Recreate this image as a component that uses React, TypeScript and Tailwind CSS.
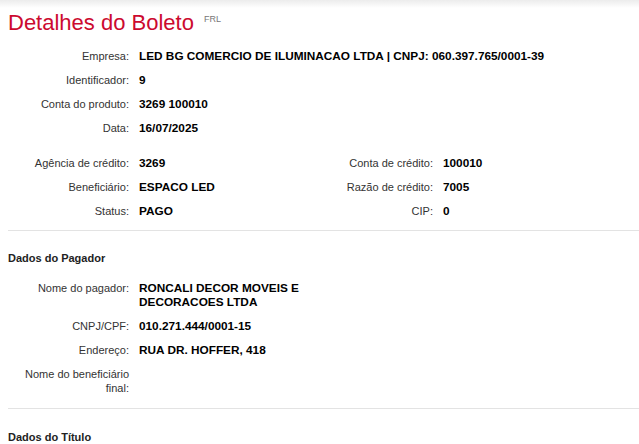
import React from "react";

type Field = { label: string; value?: string };

const resumo: Field[] = [
  { label: "Empresa:", value: "LED BG COMERCIO DE ILUMINACAO LTDA | CNPJ: 060.397.765/0001-39" },
  { label: "Identificador:", value: "9" },
  { label: "Conta do produto:", value: "3269 100010" },
  { label: "Data:", value: "16/07/2025" },
];

const credito: [Field, Field][] = [
  [
    { label: "Agência de crédito:", value: "3269" },
    { label: "Conta de crédito:", value: "100010" },
  ],
  [
    { label: "Beneficiário:", value: "ESPACO LED" },
    { label: "Razão de crédito:", value: "7005" },
  ],
  [
    { label: "Status:", value: "PAGO" },
    { label: "CIP:", value: "0" },
  ],
];

const pagador: Field[] = [
  { label: "Nome do pagador:", value: "RONCALI DECOR MOVEIS E DECORACOES LTDA" },
  { label: "CNPJ/CPF:", value: "010.271.444/0001-15" },
  { label: "Endereço:", value: "RUA DR. HOFFER, 418" },
  { label: "Nome do beneficiário final:" },
];

function Row({ label, value, narrow }: Field & { narrow?: boolean }) {
  return (
    <div className="flex py-[5px] leading-[14px]">
      <div className="w-[121px] shrink-0 text-right text-[#333]">{label}</div>
      <div
        className={`ml-[10px] text-[11.8px] font-bold text-black ${narrow ? "w-[178px]" : ""}`}
      >
        {value}
      </div>
    </div>
  );
}

export default function App() {
  return (
    <div
      className="min-h-[444px] bg-white text-[11px]"
      style={{ fontFamily: '"Liberation Sans", Arial, sans-serif' }}
    >
      <div className="h-[8px] bg-gradient-to-b from-[#ececec] to-white" />
      <div className="flex items-start px-[8px] pt-[2px]">
        <h1 className="text-[22px] leading-[26px] text-[#cc0a2f]">
          Detalhes do Boleto
        </h1>
        <span className="ml-[10px] mt-[3px] text-[9px] text-[#777]">FRL</span>
      </div>

      <div className="mt-[8px] px-[8px]">
        {resumo.map((f) => (
          <Row key={f.label} {...f} />
        ))}
      </div>

      <div className="mt-[11px] grid grid-cols-[304px_1fr] px-[8px]">
        {credito.map(([a, b]) => (
          <React.Fragment key={a.label}>
            <Row {...a} />
            <Row {...b} />
          </React.Fragment>
        ))}
      </div>

      <div className="ml-[8px] mt-[7px] border-t border-[#e3e3e3]" />

      <h2 className="mt-[20px] px-[8px] font-bold leading-[14px] text-[#222]">
        Dados do Pagador
      </h2>
      <div className="mt-[11px] px-[8px]">
        {pagador.map((f) => (
          <Row key={f.label} {...f} narrow />
        ))}
      </div>

      <div className="ml-[8px] mt-[8px] border-t border-[#e3e3e3]" />

      <h2 className="mt-[21px] px-[8px] font-bold leading-[14px] text-[#222]">
        Dados do Título
      </h2>
    </div>
  );
}
